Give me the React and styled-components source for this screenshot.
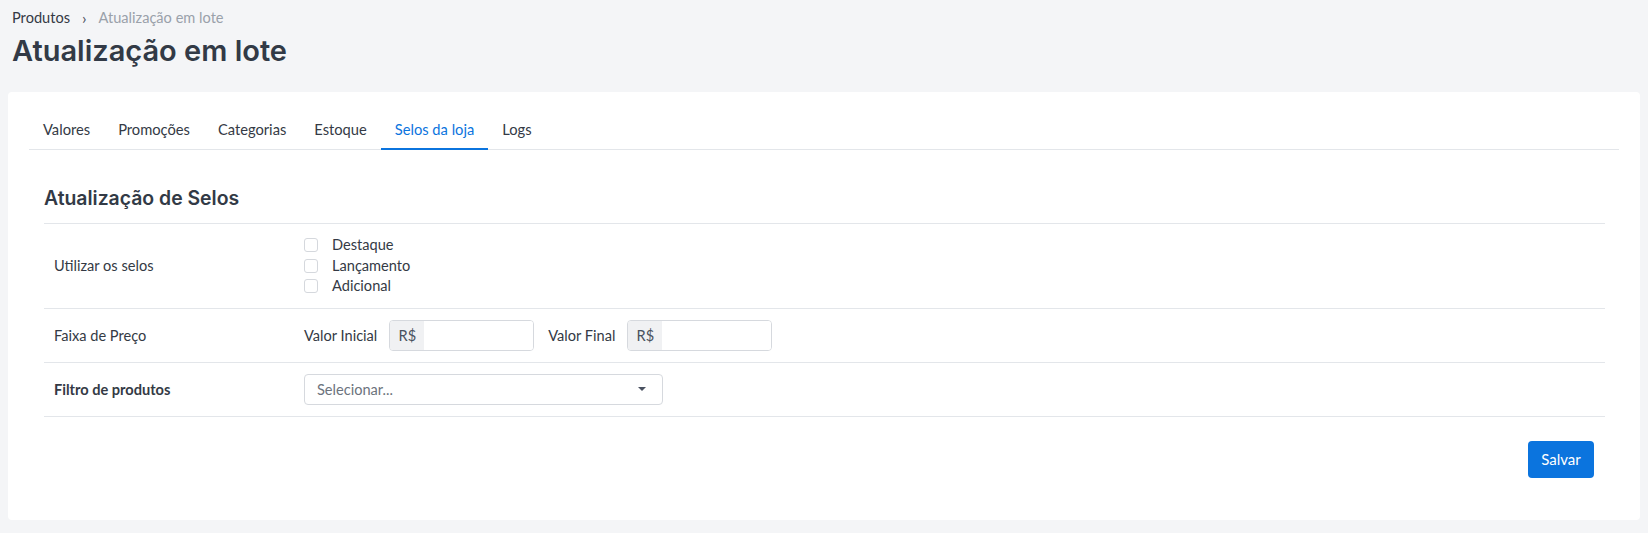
import React from "react";
import styled, { createGlobalStyle } from "styled-components";

const GlobalStyle = createGlobalStyle`
  body {
    margin: 0;
    background: #f4f5f7;
    font-family: Lato, "Noto Sans", sans-serif;
    color: #343a45;
  }
`;

const Page = styled.div`
  padding: 8px 8px 14px;
`;

const Breadcrumb = styled.div`
  display: flex;
  align-items: center;
  gap: 12px;
  padding-left: 4px;
  font-size: 14.6px;
  line-height: 20px;
`;

const Crumb = styled.span`
  color: ${(p) => (p.current ? "#9aa1aa" : "#343a45")};
`;

const Chevron = styled.span`
  font-size: 16px;
  color: #4a5160;
`;

const Title = styled.h1`
  margin: 5px 0 23px 4px;
  font-family: Inter, "Noto Sans", sans-serif;
  font-size: 29px;
  line-height: 36px;
  font-weight: 600;
  color: #323a46;
`;

const Card = styled.div`
  background: #fff;
  border-radius: 4px;
  padding: 18px 21px 20px;
`;

const TabBar = styled.div`
  display: flex;
  border-bottom: 1px solid #e3e6ea;
`;

const Tab = styled.div`
  padding: 9px 14px;
  margin-bottom: -1px;
  font-size: 14.7px;
  line-height: 20px;
  color: ${(p) => (p.active ? "#0b74de" : "#343a45")};
  border-bottom: 2px solid ${(p) => (p.active ? "#0b74de" : "transparent")};
  cursor: pointer;
`;

const Section = styled.div`
  padding: 0 14px 0 15px;
`;

const SectionTitle = styled.h2`
  margin: 35px 0 0;
  padding-bottom: 12px;
  border-bottom: 1px solid #e3e6ea;
  font-family: Inter, "Noto Sans", sans-serif;
  font-size: 19.4px;
  line-height: 26px;
  font-weight: 600;
  color: #323a46;
`;

const Row = styled.div`
  display: grid;
  grid-template-columns: 260px 1fr;
  align-items: center;
  padding: 11px 0;
  border-bottom: 1px solid #e3e6ea;
  font-size: 14.6px;
`;

const Label = styled.div`
  padding-left: 10px;
  font-weight: ${(p) => (p.bold ? 700 : 400)};
`;

const CheckList = styled.div`
  display: flex;
  flex-direction: column;
`;

const CheckRow = styled.label`
  display: flex;
  align-items: center;
  gap: 14px;
  line-height: 20.5px;
`;

const Box = styled.span`
  width: 12px;
  height: 12px;
  border: 1px solid #d5d8dd;
  border-radius: 3px;
  background: #fff;
`;

const Inline = styled.div`
  display: flex;
  align-items: center;
`;

const FieldLabel = styled.span`
  margin-right: ${(p) => p.gap}px;
`;

const InputGroup = styled.div`
  display: flex;
  width: 145px;
  height: 31px;
  box-sizing: border-box;
  border: 1px solid #d6d9de;
  border-radius: 4px;
  overflow: hidden;
  margin-right: 14px;
`;

const Addon = styled.span`
  display: flex;
  align-items: center;
  justify-content: center;
  width: 34px;
  background: #f0f1f3;
  color: #4a5160;
  font-size: 14.6px;
`;

const Input = styled.input`
  flex: 1;
  min-width: 0;
  border: none;
  outline: none;
  font: inherit;
`;

const Select = styled.div`
  display: flex;
  align-items: center;
  justify-content: space-between;
  width: 359px;
  height: 31px;
  box-sizing: border-box;
  padding: 0 16px 0 12px;
  border: 1px solid #d6d9de;
  border-radius: 4px;
  color: #6c737d;
`;

const Caret = styled.span`
  width: 0;
  height: 0;
  border-left: 4px solid transparent;
  border-right: 4px solid transparent;
  border-top: 4px solid #4a5160;
`;

const Footer = styled.div`
  display: flex;
  justify-content: flex-end;
  padding: 24px 11px 22px 0;
`;

const Button = styled.button`
  width: 66px;
  height: 37px;
  border: none;
  border-radius: 4px;
  background: #0b74de;
  color: #fff;
  font-family: inherit;
  font-size: 15px;
  cursor: pointer;
`;

const tabs = ["Valores", "Promoções", "Categorias", "Estoque", "Selos da loja", "Logs"];
const selos = ["Destaque", "Lançamento", "Adicional"];

export default function App() {
  return (
    <>
      <GlobalStyle />
      <Page>
        <Breadcrumb>
          <Crumb>Produtos</Crumb>
          <Chevron>›</Chevron>
          <Crumb current>Atualização em lote</Crumb>
        </Breadcrumb>
        <Title>Atualização em lote</Title>
        <Card>
          <TabBar>
            {tabs.map((t) => (
              <Tab key={t} active={t === "Selos da loja"}>
                {t}
              </Tab>
            ))}
          </TabBar>
          <Section>
            <SectionTitle>Atualização de Selos</SectionTitle>
            <Row>
              <Label>Utilizar os selos</Label>
              <CheckList>
                {selos.map((s) => (
                  <CheckRow key={s}>
                    <Box />
                    {s}
                  </CheckRow>
                ))}
              </CheckList>
            </Row>
            <Row>
              <Label>Faixa de Preço</Label>
              <Inline>
                <FieldLabel gap={12}>Valor Inicial</FieldLabel>
                <InputGroup>
                  <Addon>R$</Addon>
                  <Input />
                </InputGroup>
                <FieldLabel gap={12}>Valor Final</FieldLabel>
                <InputGroup>
                  <Addon>R$</Addon>
                  <Input />
                </InputGroup>
              </Inline>
            </Row>
            <Row>
              <Label bold>Filtro de produtos</Label>
              <Select>
                Selecionar...
                <Caret />
              </Select>
            </Row>
            <Footer>
              <Button>Salvar</Button>
            </Footer>
          </Section>
        </Card>
      </Page>
    </>
  );
}
